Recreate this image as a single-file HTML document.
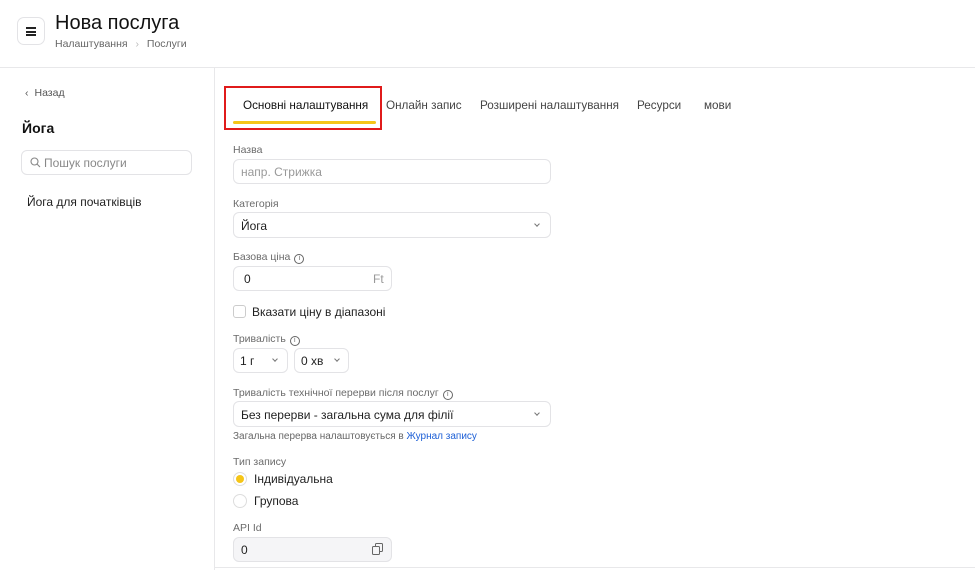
<!DOCTYPE html>
<html><head><meta charset="utf-8"><style>
*{box-sizing:border-box;margin:0;padding:0}
body{width:975px;height:570px;overflow:hidden;background:#fff;font-family:"Liberation Sans","Noto Sans CJK SC",sans-serif;color:#1f1f1f;position:relative}
.a{position:absolute;white-space:nowrap}
.lbl{font-size:10.5px;color:#6b6b6b}
.box{position:absolute;border:1px solid #e3e3e6;border-radius:6px;background:#fff}
.chev{position:absolute;width:5px;height:5px;border-right:1px solid #777;border-bottom:1px solid #777;transform:rotate(45deg)}
.info{display:inline-block;width:10px;height:10px;border:1px solid #666;border-radius:50%;font-size:7px;text-align:center;line-height:8px;vertical-align:0px;margin-left:4px;color:#666}
.t{font-size:12px}
</style></head><body>
<div class="a" style="left:0;top:67px;width:975px;height:1px;background:#e8e8ea"></div>
<div class="a" style="left:214px;top:68px;width:1px;height:502px;background:#e8e8ea"></div>
<div class="a" style="left:215px;top:567px;width:760px;height:1px;background:#e8e8ea"></div>
<div class="box" style="left:17px;top:17px;width:28px;height:28px;border-radius:7px"></div>
<div class="a" style="left:26px;top:27px;width:10px;height:2px;background:#222"></div>
<div class="a" style="left:26px;top:30.5px;width:10px;height:2px;background:#222"></div>
<div class="a" style="left:26px;top:34px;width:10px;height:2px;background:#222"></div>
<div class="a" style="left:55px;top:12px;font-size:20px;color:#111">Нова послуга</div>
<div class="a" style="left:55px;top:38px;font-size:10.5px;color:#666">Налаштування <span style="color:#bbb;margin:0 5px">›</span> Послуги</div>
<div class="a" style="left:25px;top:87px;font-size:10.5px;color:#555"><span style="margin-right:6px">‹</span>Назад</div>
<div class="a" style="left:22px;top:120px;font-size:14px;font-weight:bold;color:#111">Йога</div>
<div class="box" style="left:21px;top:150px;width:171px;height:25px"></div>
<svg class="a" style="left:30px;top:157px" width="11" height="11" viewBox="0 0 11 11"><circle cx="4.5" cy="4.5" r="3.5" fill="none" stroke="#888" stroke-width="1.1"/><path d="M7 7l3 3" stroke="#888" stroke-width="1.1"/></svg>
<div class="a t" style="left:44px;top:156px;color:#888">Пошук послуги</div>
<div class="a t" style="left:27px;top:195px;color:#222">Йога для початківців</div>
<div class="a" style="left:224px;top:86px;width:158px;height:44px;border:2px solid #e01b1b"></div>
<div class="a" style="left:233px;top:121px;width:143px;height:3px;background:#f5c518;border-radius:2px"></div>
<div class="a" style="left:243px;top:99px;font-size:11.7px;color:#111">Основні налаштування</div>
<div class="a" style="left:386px;top:99px;font-size:11.7px;color:#444">Онлайн запис</div>
<div class="a" style="left:480px;top:99px;font-size:11.7px;color:#444">Розширені налаштування</div>
<div class="a" style="left:637px;top:99px;font-size:11.7px;color:#444">Ресурси</div>
<div class="a" style="left:704px;top:99px;font-size:11.7px;color:#444">мови</div>
<div class="a lbl" style="left:233px;top:144px">Назва</div>
<div class="box" style="left:233px;top:159px;width:318px;height:25px"></div>
<div class="a t" style="left:241px;top:165px;color:#999">напр. Стрижка</div>
<div class="a lbl" style="left:233px;top:198px">Категорія</div>
<div class="box" style="left:233px;top:212px;width:318px;height:26px"></div>
<div class="a t" style="left:241px;top:219px">Йога</div>
<div class="chev" style="left:535px;top:222px;width:4px;height:4px"></div>
<div class="a lbl" style="left:233px;top:251px">Базова ціна<span class="info">i</span></div>
<div class="box" style="left:233px;top:266px;width:159px;height:25px"></div>
<div class="a t" style="left:244px;top:272px">0</div>
<div class="a" style="left:373px;top:272px;font-size:12px;color:#999">Ft</div>
<div class="box" style="left:233px;top:305px;width:13px;height:13px;border-radius:3px;border-color:#ccc"></div>
<div class="a t" style="left:252px;top:305px">Вказати ціну в діапазоні</div>
<div class="a lbl" style="left:233px;top:333px">Тривалість<span class="info">i</span></div>
<div class="box" style="left:233px;top:348px;width:55px;height:25px"></div>
<div class="a t" style="left:240px;top:354px">1 г</div>
<div class="chev" style="left:273px;top:357px;width:4px;height:4px"></div>
<div class="box" style="left:294px;top:348px;width:55px;height:25px"></div>
<div class="a t" style="left:301px;top:354px">0 хв</div>
<div class="chev" style="left:335px;top:357px;width:4px;height:4px"></div>
<div class="a lbl" style="left:233px;top:387px">Тривалість технічної перерви після послуг<span class="info">i</span></div>
<div class="box" style="left:233px;top:401px;width:318px;height:26px"></div>
<div class="a t" style="left:241px;top:408px">Без перерви - загальна сума для філії</div>
<div class="chev" style="left:535px;top:411px;width:4px;height:4px"></div>
<div class="a" style="left:233px;top:431px;font-size:10px;color:#666">Загальна перерва налаштовується в <span style="color:#1d5fd6">Журнал запису</span></div>
<div class="a lbl" style="left:233px;top:456px">Тип запису</div>
<div class="a" style="left:233px;top:472px;width:14px;height:14px;border-radius:50%;border:1px solid #ddd;background:#fff"></div>
<div class="a" style="left:236px;top:475px;width:8px;height:8px;border-radius:50%;background:#f5c518"></div>
<div class="a t" style="left:254px;top:472px">Індивідуальна</div>
<div class="a" style="left:233px;top:494px;width:14px;height:14px;border-radius:50%;border:1px solid #ddd"></div>
<div class="a t" style="left:254px;top:494px">Групова</div>
<div class="a lbl" style="left:233px;top:522px">API Id</div>
<div class="box" style="left:233px;top:537px;width:159px;height:25px;background:#f5f5f7"></div>
<div class="a t" style="left:241px;top:543px">0</div>
<svg class="a" style="left:372px;top:543px" width="11" height="12" viewBox="0 0 11 12"><rect x="3.5" y="0.5" width="7" height="8" rx="1" fill="none" stroke="#666"/><rect x="0.5" y="3.5" width="7" height="8" rx="1" fill="#f5f5f7" stroke="#666"/></svg>
</body></html>
